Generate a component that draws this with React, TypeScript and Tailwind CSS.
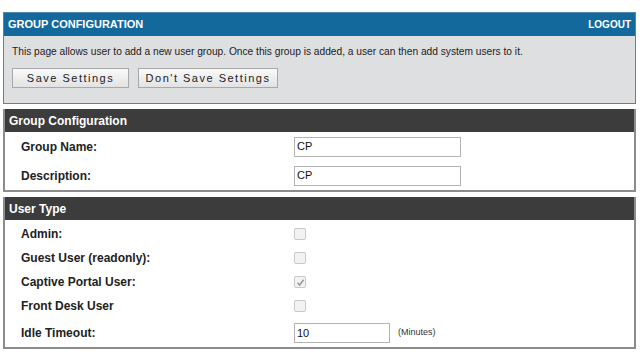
const font = "font-['Tahoma','Liberation_Sans',Arial,sans-serif]";

const Box = ({ checked }: { checked?: boolean }) => (
  <span className="flex h-[12px] w-[12px] items-center justify-center rounded-[2px] border border-[#c8c8c8] bg-[#f2f2f2]">
    {checked && (
      <svg width="9" height="9" viewBox="0 0 9 9">
        <path d="M1.5 4.8 L3.6 7 L7.6 1.8" fill="none" stroke="#9a9a9a" strokeWidth="1.6" />
      </svg>
    )}
  </span>
);

const Row = ({ label, h = "h-[24px]", children }: { label: string; h?: string; children: React.ReactNode }) => (
  <div className={`flex ${h} items-center`}>
    <div className="w-[289px] pl-[16px] text-[12px] font-bold text-[#222]">{label}</div>
    {children}
  </div>
);

const TextInput = ({ value, w }: { value: string; w: string }) => (
  <div className={`flex h-[20px] ${w} items-center border border-[#b3b3b3] bg-white px-[2px] text-[11px] text-[#111]`}>
    {value}
  </div>
);

const Header = ({ title }: { title: string }) => (
  <div className="flex h-[23px] items-center bg-[#3c3c3c] px-[4px] text-[12px] font-bold text-white">{title}</div>
);

export default function App() {
  return (
    <div className={`min-h-[352px] bg-white pl-[3px] pr-[4px] pt-[12px] ${font}`}>
      <div className="border border-[#4f88ad]">
        <div className="flex h-[23px] items-center justify-between bg-[#13689c] px-[4px] text-[11px] font-bold text-white">
          <span>GROUP CONFIGURATION</span>
          <span className="text-[10px]">LOGOUT</span>
        </div>
        <div className="h-[67px] bg-[#dedfe0] px-[8px] pt-[7px] text-[10.2px] text-[#222]">
          <p className="h-[17px] leading-[17px]">
            This page allows user to add a new user group. Once this group is added, a user can then add system users to it.
          </p>
          <div className="mt-[8px] flex gap-[9px]">
            <button className="h-[20px] w-[117px] border border-[#a8a8a8] bg-gradient-to-b from-[#fafafa] to-[#e2e2e2] text-[11px] tracking-[1.5px] text-[#222]">
              Save Settings
            </button>
            <button className="h-[20px] w-[140px] border border-[#a8a8a8] bg-gradient-to-b from-[#fafafa] to-[#e2e2e2] text-[11px] tracking-[1.5px] text-[#222]">
              Don't Save Settings
            </button>
          </div>
        </div>
      </div>

      <div className="mt-[5px] border-x-2 border-b-2 border-[#8c8c8c]">
        <Header title="Group Configuration" />
        <div className="pt-[2px] pb-[2px]">
          <Row label="Group Name:" h="h-[25px]">
            <TextInput value="CP" w="w-[167px]" />
          </Row>
          <div className="h-[4px]" />
          <Row label="Description:" h="h-[25px]">
            <TextInput value="CP" w="w-[167px]" />
          </Row>
        </div>
      </div>

      <div className="mt-[5px] border-x-2 border-b-2 border-[#8c8c8c]">
        <Header title="User Type" />
        <div className="pt-[2px] pb-[2px]">
          <Row label="Admin:">
            <Box />
          </Row>
          <Row label="Guest User (readonly):">
            <Box />
          </Row>
          <Row label="Captive Portal User:">
            <Box checked />
          </Row>
          <Row label="Front Desk User">
            <Box />
          </Row>
          <div className="h-[3px]" />
          <Row label="Idle Timeout:">
            <TextInput value="10" w="w-[96px]" />
            <span className="ml-[8px] text-[9px] text-[#333]">(Minutes)</span>
          </Row>
        </div>
      </div>
    </div>
  );
}
